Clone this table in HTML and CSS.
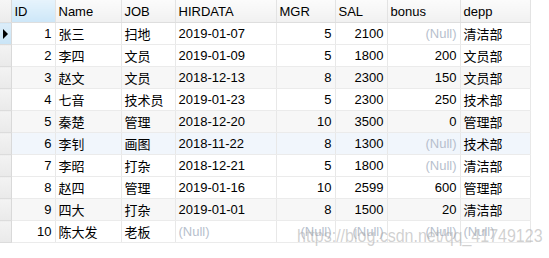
FILE: index.html
```html
<!DOCTYPE html>
<html>
<head>
<meta charset="utf-8">
<link rel="stylesheet" href="styles.css">
</head>
<body>
<div class="grid-wrap">
<table class="grid">
<colgroup>
<col class="c-ind"><col class="c-id"><col class="c-name"><col class="c-job"><col class="c-date"><col class="c-mgr"><col class="c-sal"><col class="c-bonus"><col class="c-depp">
</colgroup>
<thead>
<tr>
<th class="ind"></th><th class="cur">ID</th><th>Name</th><th>JOB</th><th>HIRDATA</th><th>MGR</th><th>SAL</th><th>bonus</th><th>depp</th>
</tr>
</thead>
<tbody>
<tr class="sel"><td class="ind ind-cur"><span class="tri"></span></td><td class="num">1</td><td>张三</td><td>扫地</td><td>2019-01-07</td><td class="num">5</td><td class="num">2100</td><td class="num null">(Null)</td><td>清洁部</td></tr>
<tr><td class="ind"></td><td class="num">2</td><td>李四</td><td>文员</td><td>2019-01-09</td><td class="num">5</td><td class="num">1800</td><td class="num">200</td><td>文员部</td></tr>
<tr class="alt"><td class="ind"></td><td class="num">3</td><td>赵文</td><td>文员</td><td>2018-12-13</td><td class="num">8</td><td class="num">2300</td><td class="num">150</td><td>文员部</td></tr>
<tr><td class="ind"></td><td class="num">4</td><td>七音</td><td>技术员</td><td>2019-01-23</td><td class="num">5</td><td class="num">2300</td><td class="num">250</td><td>技术部</td></tr>
<tr class="alt"><td class="ind"></td><td class="num">5</td><td>秦楚</td><td>管理</td><td>2018-12-20</td><td class="num">10</td><td class="num">3500</td><td class="num">0</td><td>管理部</td></tr>
<tr class="hover"><td class="ind"></td><td class="num">6</td><td>李钊</td><td>画图</td><td>2018-11-22</td><td class="num">8</td><td class="num">1300</td><td class="num null">(Null)</td><td>技术部</td></tr>
<tr><td class="ind"></td><td class="num">7</td><td>李昭</td><td>打杂</td><td>2018-12-21</td><td class="num">5</td><td class="num">1800</td><td class="num null">(Null)</td><td>清洁部</td></tr>
<tr><td class="ind"></td><td class="num">8</td><td>赵四</td><td>管理</td><td>2019-01-16</td><td class="num">10</td><td class="num">2599</td><td class="num">600</td><td>管理部</td></tr>
<tr class="alt"><td class="ind"></td><td class="num">9</td><td>四大</td><td>打杂</td><td>2019-01-01</td><td class="num">8</td><td class="num">1500</td><td class="num">20</td><td>清洁部</td></tr>
<tr><td class="ind"></td><td class="num">10</td><td>陈大发</td><td>老板</td><td class="null">(Null)</td><td class="num null">(Null)</td><td class="num null">(Null)</td><td class="num null">(Null)</td><td class="null">(Null)</td></tr>
</tbody>
</table>
<div class="watermark">https://blog.csdn.net/qq_41749123</div>
</div>
</body>
</html>
```

FILE: styles.css
```css
html, body {
  margin: 0;
  padding: 0;
  background: #ffffff;
}
body {
  font-family: "Liberation Sans", "Noto Sans CJK SC", sans-serif;
  font-size: 13px;
  color: #000000;
}
.grid-wrap {
  position: relative;
  width: 549px;
  height: 258px;
  overflow: hidden;
}
.grid {
  border-collapse: collapse;
  table-layout: fixed;
  width: 530px;
}
.c-ind { width: 11px; }
.c-id { width: 44px; }
.c-name { width: 66px; }
.c-job { width: 54px; }
.c-date { width: 101px; }
.c-mgr { width: 59px; }
.c-sal { width: 52px; }
.c-bonus { width: 73px; }
.c-depp { width: 70px; }

.grid th {
  height: 22px;
  padding: 0 3px;
  text-align: left;
  font-weight: normal;
  background: linear-gradient(#fbfbfb, #f1f1f1);
  border-right: 1px solid #e3e3e3;
  border-bottom: 1px solid #dedede;
  white-space: nowrap;
  overflow: hidden;
}
.grid th.cur {
  background: linear-gradient(#e6f3fc, #cde7f8);
}
.grid th.ind {
  background: linear-gradient(#f6f6f6, #ececec);
  border-right: 1px solid #d9d9d9;
  padding: 0;
}
.grid td {
  height: 21px;
  padding: 0 3px;
  border-right: 1px solid #e8e8e8;
  border-bottom: 1px solid #ebebeb;
  white-space: nowrap;
  overflow: hidden;
  background: #ffffff;
}
.grid tr.alt td { background: #f7f7f7; }
.grid tr.hover td { background: #f1f6fc; }
.grid td.num { text-align: right; }
.grid td.null { color: #b7bfcd; }
.grid td.ind {
  padding: 0;
  background: linear-gradient(#f3f3f3, #e9e9e9);
  border-right: 1px solid #d9d9d9;
  border-bottom: 1px solid #dcdcdc;
}
.grid tr.alt td.ind, .grid tr.hover td.ind {
  background: linear-gradient(#f3f3f3, #e9e9e9);
}
.grid td.ind-cur {
  background: linear-gradient(#dcedf9, #c9e4f6);
}
.tri {
  display: block;
  width: 0;
  height: 0;
  margin-left: 3px;
  border-top: 5px solid transparent;
  border-bottom: 5px solid transparent;
  border-left: 5px solid #000000;
}
.watermark {
  position: absolute;
  left: 297px;
  top: 225px;
  font-family: "Liberation Sans", sans-serif;
  font-size: 16px;
  line-height: 20px;
  color: rgba(170, 170, 170, 0.55);
  white-space: nowrap;
  transform: scaleY(1.15);
  transform-origin: top left;
}
```
